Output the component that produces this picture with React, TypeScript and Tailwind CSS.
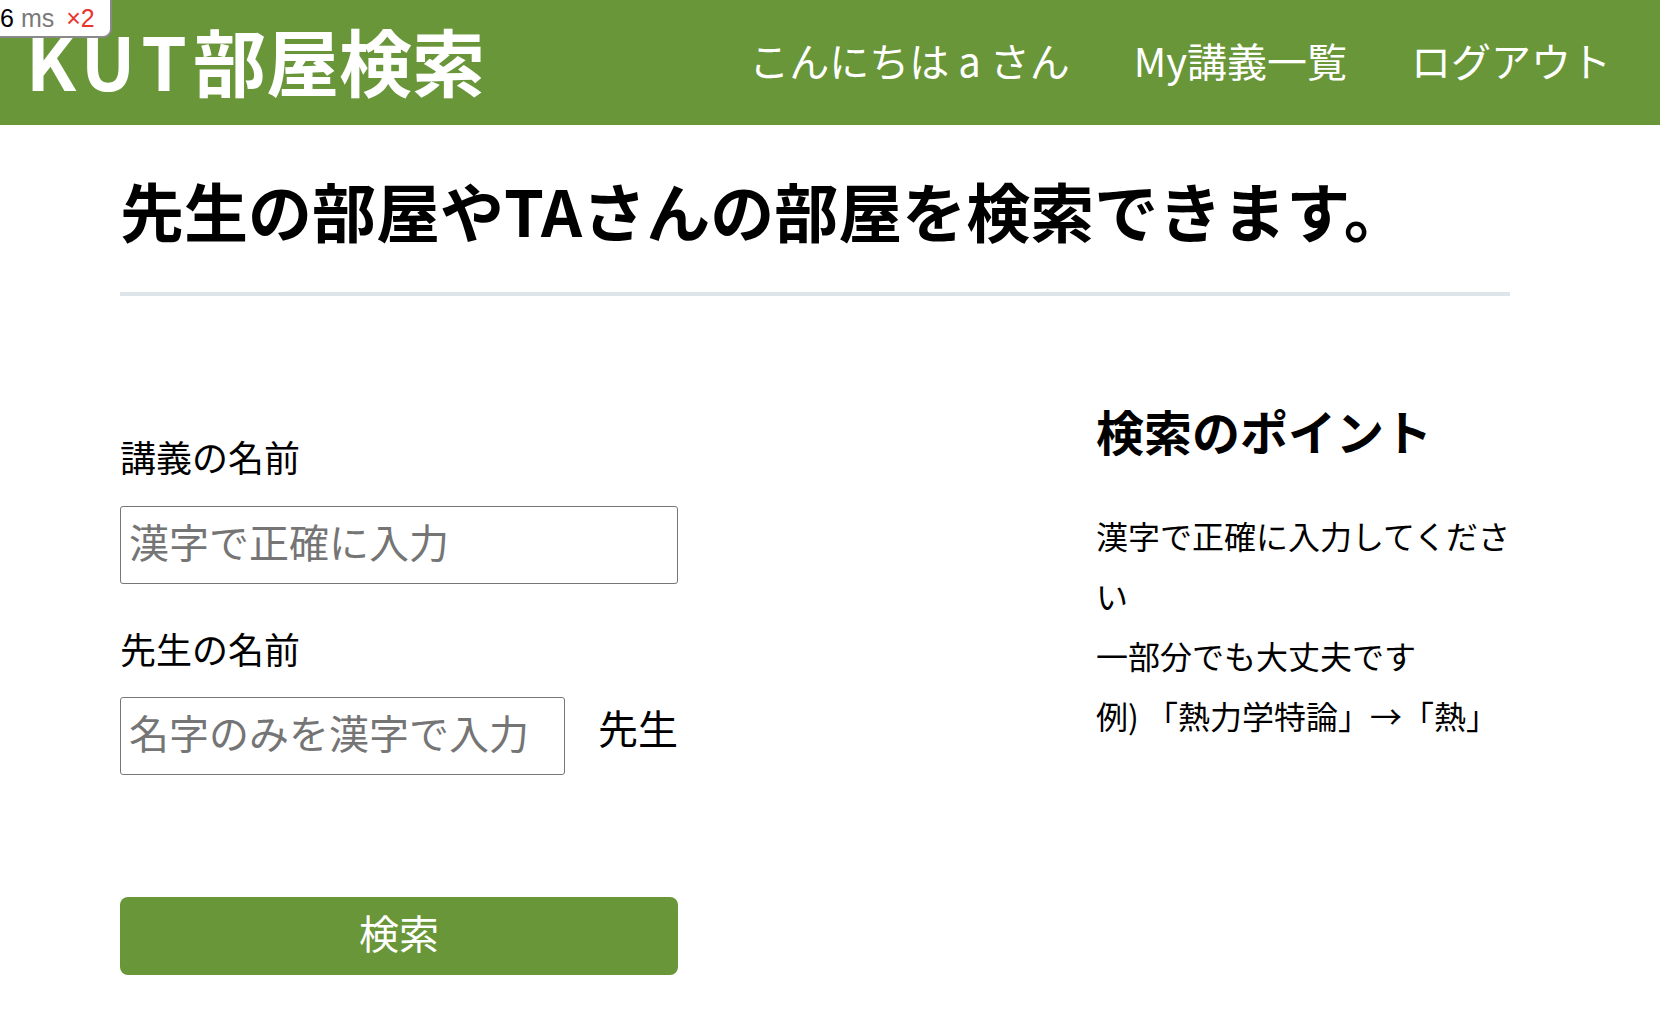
const font = "font-['Noto_Sans_CJK_JP','Noto_Sans',sans-serif]";

function RenderBadge() {
  // dev overlay in the top-left corner
  return (
    <div className="absolute left-0 top-0 z-10 flex h-[38px] w-[112px] items-center rounded-br-[9px] border-b-2 border-r-2 border-[#8a8a8a] bg-white">
      <span className="whitespace-nowrap font-['Liberation_Sans',sans-serif] text-[25px] leading-none">
        <span className="text-black">6</span>
        <span className="ml-[7px] text-[#7a7a7a]">ms</span>
        <span className="ml-[12px] text-[#e8362c]">×2</span>
      </span>
    </div>
  );
}

function Header() {
  return (
    <header className="flex h-[125px] items-center justify-between bg-[#699639] pb-[6px] pl-[26px] pr-[49px] text-white">
      <h1 className="text-[73px] font-bold leading-none">
        <span className="tracking-[6px]">KUT</span>部屋検索
      </h1>
      <nav className="flex items-center gap-[64px] text-[40px] leading-none">
        <span>こんにちは a さん</span>
        <a href="#">My講義一覧</a>
        <a href="#">ログアウト</a>
      </nav>
    </header>
  );
}

function SearchForm() {
  return (
    <form className="flex w-[558px] flex-col pt-[142px]">
      <label className="text-[36px] leading-[36px]">講義の名前</label>
      <input
        type="text"
        placeholder="漢字で正確に入力"
        className="mt-[32px] h-[78px] w-full rounded-[3px] border border-[#767676] px-[8px] pb-[8px] text-[40px] placeholder:text-[#757575]"
      />
      <label className="mt-[46px] text-[36px] leading-[36px]">先生の名前</label>
      <div className="mt-[31px] flex items-start justify-between">
        <input
          type="text"
          placeholder="名字のみを漢字で入力"
          className="h-[78px] w-[445px] rounded-[3px] border border-[#767676] px-[8px] pb-[8px] text-[40px] placeholder:text-[#757575]"
        />
        <span className="mt-[10px] text-[40px] leading-[40px]">先生</span>
      </div>
      <button
        type="button"
        className="mt-[122px] h-[78px] w-full rounded-[8px] bg-[#699639] pb-[8px] text-[40px] text-white"
      >
        検索
      </button>
    </form>
  );
}

function Tips() {
  return (
    <aside className="w-[414px] pt-[110px]">
      <h3 className="text-[48px] font-bold leading-[48px]">検索のポイント</h3>
      <p className="mt-[51px] w-[424px] text-[32px] leading-[60px]">
        漢字で正確に入力してください
        <br />
        一部分でも大丈夫です
        <br />
        例) 「熱力学特論」→「熱」
      </p>
    </aside>
  );
}

export default function App() {
  return (
    <div className={`relative min-h-[1032px] bg-white text-black ${font}`}>
      <RenderBadge />
      <Header />
      <main className="ml-[120px] w-[1390px] pt-[52px]">
        <h2 className="text-[64px] font-bold leading-[64px]">
          先生の部屋やTAさんの部屋を検索できます。
        </h2>
        <hr className="mt-[51px] h-[4px] border-0 bg-[#dfe6e9]" />
        <div className="flex justify-between">
          <SearchForm />
          <Tips />
        </div>
      </main>
    </div>
  );
}
